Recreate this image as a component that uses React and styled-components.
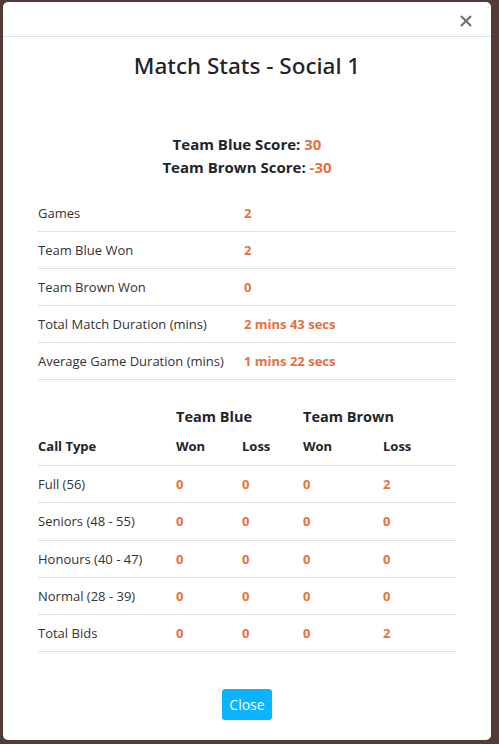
import React from 'react';
import styled, { createGlobalStyle } from 'styled-components';

const GlobalStyle = createGlobalStyle`
  html, body {
    margin: 0;
    padding: 0;
    background: #553b38;
  }
  body {
    font-family: "Open Sans", "Noto Sans", "Liberation Sans", sans-serif;
    color: #212529;
  }
`;

const stats = [
  ['Games', '2'],
  ['Team Blue Won', '2'],
  ['Team Brown Won', '0'],
  ['Total Match Duration (mins)', '2 mins 43 secs'],
  ['Average Game Duration (mins)', '1 mins 22 secs'],
];

const calls = [
  ['Full (56)', '0', '0', '0', '2'],
  ['Seniors (48 - 55)', '0', '0', '0', '0'],
  ['Honours (40 - 47)', '0', '0', '0', '0'],
  ['Normal (28 - 39)', '0', '0', '0', '0'],
  ['Total Bids', '0', '0', '0', '2'],
];

const App = () => {
  return (
    <Backdrop>
      <GlobalStyle />
      <Modal>
        <Header>
          <CloseX aria-label="close">
            <svg width="12" height="12" viewBox="0 0 12 12">
              <path d="M1 1 L11 11 M11 1 L1 11" stroke="#6c6c6c" strokeWidth="2" />
            </svg>
          </CloseX>
        </Header>

        <Body>
          <Title>Match Stats - Social 1</Title>

          <Scores>
            <div>Team Blue Score: <Hot>30</Hot></div>
            <div>Team Brown Score: <Hot>-30</Hot></div>
          </Scores>

          <StatsTable>
            <tbody>
              {stats.map(([label, value]) => (
                <tr key={label}>
                  <LabelCell>{label}</LabelCell>
                  <ValueCell>{value}</ValueCell>
                </tr>
              ))}
            </tbody>
          </StatsTable>

          <CallTable>
            <thead>
              <TeamRow>
                <th />
                <th colSpan={2}>Team Blue</th>
                <th colSpan={2}>Team Brown</th>
              </TeamRow>
              <HeadRow>
                <th>Call Type</th>
                <th>Won</th>
                <th>Loss</th>
                <th>Won</th>
                <th>Loss</th>
              </HeadRow>
            </thead>
            <tbody>
              {calls.map(([label, ...vals]) => (
                <tr key={label}>
                  <LabelCell>{label}</LabelCell>
                  {vals.map((v, i) => (
                    <ValueCell key={i}>{v}</ValueCell>
                  ))}
                </tr>
              ))}
            </tbody>
          </CallTable>
        </Body>

        <Footer>
          <CloseButton type="button">Close</CloseButton>
        </Footer>
      </Modal>
    </Backdrop>
  );
};

export default App;

const Backdrop = styled.div`
  width: 499px;
  height: 744px;
  padding: 2px 8px 0 3px;
  box-sizing: border-box;
  background: #553b38;
`;

const Modal = styled.div`
  width: 488px;
  height: 738px;
  background: #fff;
  border-radius: 5px;
  display: flex;
  flex-direction: column;
  box-sizing: border-box;
`;

const Header = styled.div`
  height: 34px;
  border-bottom: 1px solid #dee2e6;
  display: flex;
  justify-content: flex-end;
  align-items: center;
  padding: 0 19px 0 0;
`;

const CloseX = styled.button`
  border: none;
  background: none;
  padding: 0;
  margin-top: 4px;
  display: flex;
  cursor: pointer;
`;

const Body = styled.div`
  flex: 1;
  padding: 0 35px;
`;

const Title = styled.h2`
  margin: 14px 0 0;
  text-align: center;
  font-family: "Noto Sans", "Open Sans", sans-serif;
  font-size: 22.5px;
  font-weight: 500;
  line-height: 30px;
`;

const Scores = styled.div`
  margin-top: 52px;
  text-align: center;
  font-weight: 700;
  font-size: 15px;
  line-height: 23px;
`;

const Hot = styled.span`
  color: #e8703f;
`;

const StatsTable = styled.table`
  width: 100%;
  margin-top: 16px;
  border-collapse: collapse;
  font-size: 13px;

  td {
    height: 36px;
    border-bottom: 1px solid #dee2e6;
    padding: 0;
  }
  td:first-child {
    width: 206px;
  }
`;

const LabelCell = styled.td`
  color: #333;
`;

const ValueCell = styled.td`
  color: #e8703f;
  font-weight: 700;
`;

const CallTable = styled.table`
  width: 100%;
  margin-top: 23px;
  border-collapse: collapse;
  font-size: 13px;
  text-align: left;

  th, td {
    padding: 0;
  }
  td {
    height: 36.25px;
    border-bottom: 1px solid #dee2e6;
  }
  td:nth-child(1), th:nth-child(1) { width: 138px; }
`;

const TeamRow = styled.tr`
  th {
    font-size: 14.5px;
    font-weight: 700;
    height: 26px;
    vertical-align: middle;
    text-align: left;
  }
  th:nth-child(2) { width: 127px; }
`;

const HeadRow = styled.tr`
  th {
    height: 34px;
    padding-bottom: 2px;
    font-weight: 700;
    border-bottom: 1px solid #dee2e6;
  }
  th:nth-child(2) { width: 66px; }
  th:nth-child(3) { width: 61px; }
  th:nth-child(4) { width: 80px; }
`;

const Footer = styled.div`
  display: flex;
  justify-content: center;
  padding-bottom: 20px;
`;

const CloseButton = styled.button`
  background: #0ab4fe;
  color: #fff;
  border: none;
  border-radius: 3px;
  font-family: inherit;
  font-size: 14px;
  width: 50px;
  height: 31px;
  padding: 0;
`;
